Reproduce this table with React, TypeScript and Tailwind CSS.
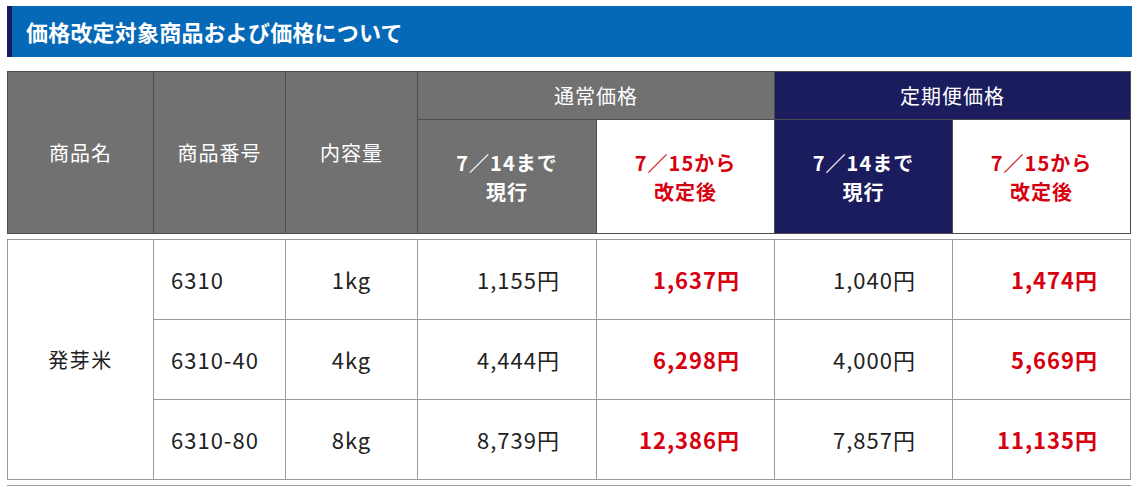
const rows = [
  { code: "6310", size: "1kg", a: "1,155円", b: "1,637円", c: "1,040円", d: "1,474円" },
  { code: "6310-40", size: "4kg", a: "4,444円", b: "6,298円", c: "4,000円", d: "5,669円" },
  { code: "6310-80", size: "8kg", a: "8,739円", b: "12,386円", c: "7,857円", d: "11,135円" },
]

const font = { fontFamily: '"Noto Sans CJK JP", "Noto Sans", sans-serif' }

function Cols() {
  return (
    <colgroup>
      <col className="w-[146px]" />
      <col className="w-[132px]" />
      <col className="w-[132px]" />
      <col className="w-[179px]" />
      <col className="w-[178px]" />
      <col className="w-[178px]" />
      <col className="w-[178px]" />
    </colgroup>
  )
}

export default function App() {
  return (
    <div className="bg-white w-[1139px] h-[487px] overflow-hidden pt-[6px] px-[7px]" style={font}>
      <div className="h-[51px] w-[1125px] bg-[#0569b8] border-l-[5px] border-[#141b62] flex items-center pl-[14px]">
        <h2 className="text-white text-[22px] font-bold tracking-[0.2px]">価格改定対象商品および価格について</h2>
      </div>

      <table className="mt-[14px] w-[1124px] table-fixed border-collapse text-[20px] tracking-[1px] text-white">
        <Cols />
        <thead>
          <tr className="h-[48px]">
            <th rowSpan={2} className="bg-[#717171] border border-[#4d4d4d] font-normal">商品名</th>
            <th rowSpan={2} className="bg-[#717171] border border-[#4d4d4d] font-normal">商品番号</th>
            <th rowSpan={2} className="bg-[#717171] border border-[#4d4d4d] font-normal">内容量</th>
            <th colSpan={2} className="bg-[#717171] border border-[#4d4d4d] font-normal">通常価格</th>
            <th colSpan={2} className="bg-[#1b1c5e] border border-[#4d4d4d] font-normal">定期便価格</th>
          </tr>
          <tr className="h-[114px]">
            <th className="bg-[#717171] border border-[#4d4d4d] font-bold leading-[29px]">7／14まで<br />現行</th>
            <th className="bg-white border border-[#4d4d4d] font-bold leading-[29px] text-[#d7000f]">7／15から<br />改定後</th>
            <th className="bg-[#1b1c5e] border border-[#4d4d4d] font-bold leading-[29px]">7／14まで<br />現行</th>
            <th className="bg-white border border-[#4d4d4d] font-bold leading-[29px] text-[#d7000f]">7／15から<br />改定後</th>
          </tr>
        </thead>
      </table>

      <table className="mt-[5px] w-[1124px] table-fixed border-collapse text-[22px] tracking-[1px] text-[#222]">
        <Cols />
        <tbody>
          {rows.map((r, i) => (
            <tr key={r.code} className="h-[80px]">
              {i === 0 && (
                <td rowSpan={3} className="border border-[#9a9a9a] text-center text-[20px] tracking-[1.5px]">発芽米</td>
              )}
              <td className="border border-[#9a9a9a] pl-[17px]">{r.code}</td>
              <td className="border border-[#9a9a9a] text-center">{r.size}</td>
              <td className="border border-[#9a9a9a] text-right pr-[36px]">{r.a}</td>
              <td className="border border-[#9a9a9a] text-right pr-[34px] font-bold text-[#d7000f]">{r.b}</td>
              <td className="border border-[#9a9a9a] text-right pr-[36px]">{r.c}</td>
              <td className="border border-[#9a9a9a] text-right pr-[32px] font-bold text-[#d7000f]">{r.d}</td>
            </tr>
          ))}
        </tbody>
      </table>
      <div className="mt-[5px] w-[1124px] border-t border-[#9a9a9a]" />
    </div>
  )
}
